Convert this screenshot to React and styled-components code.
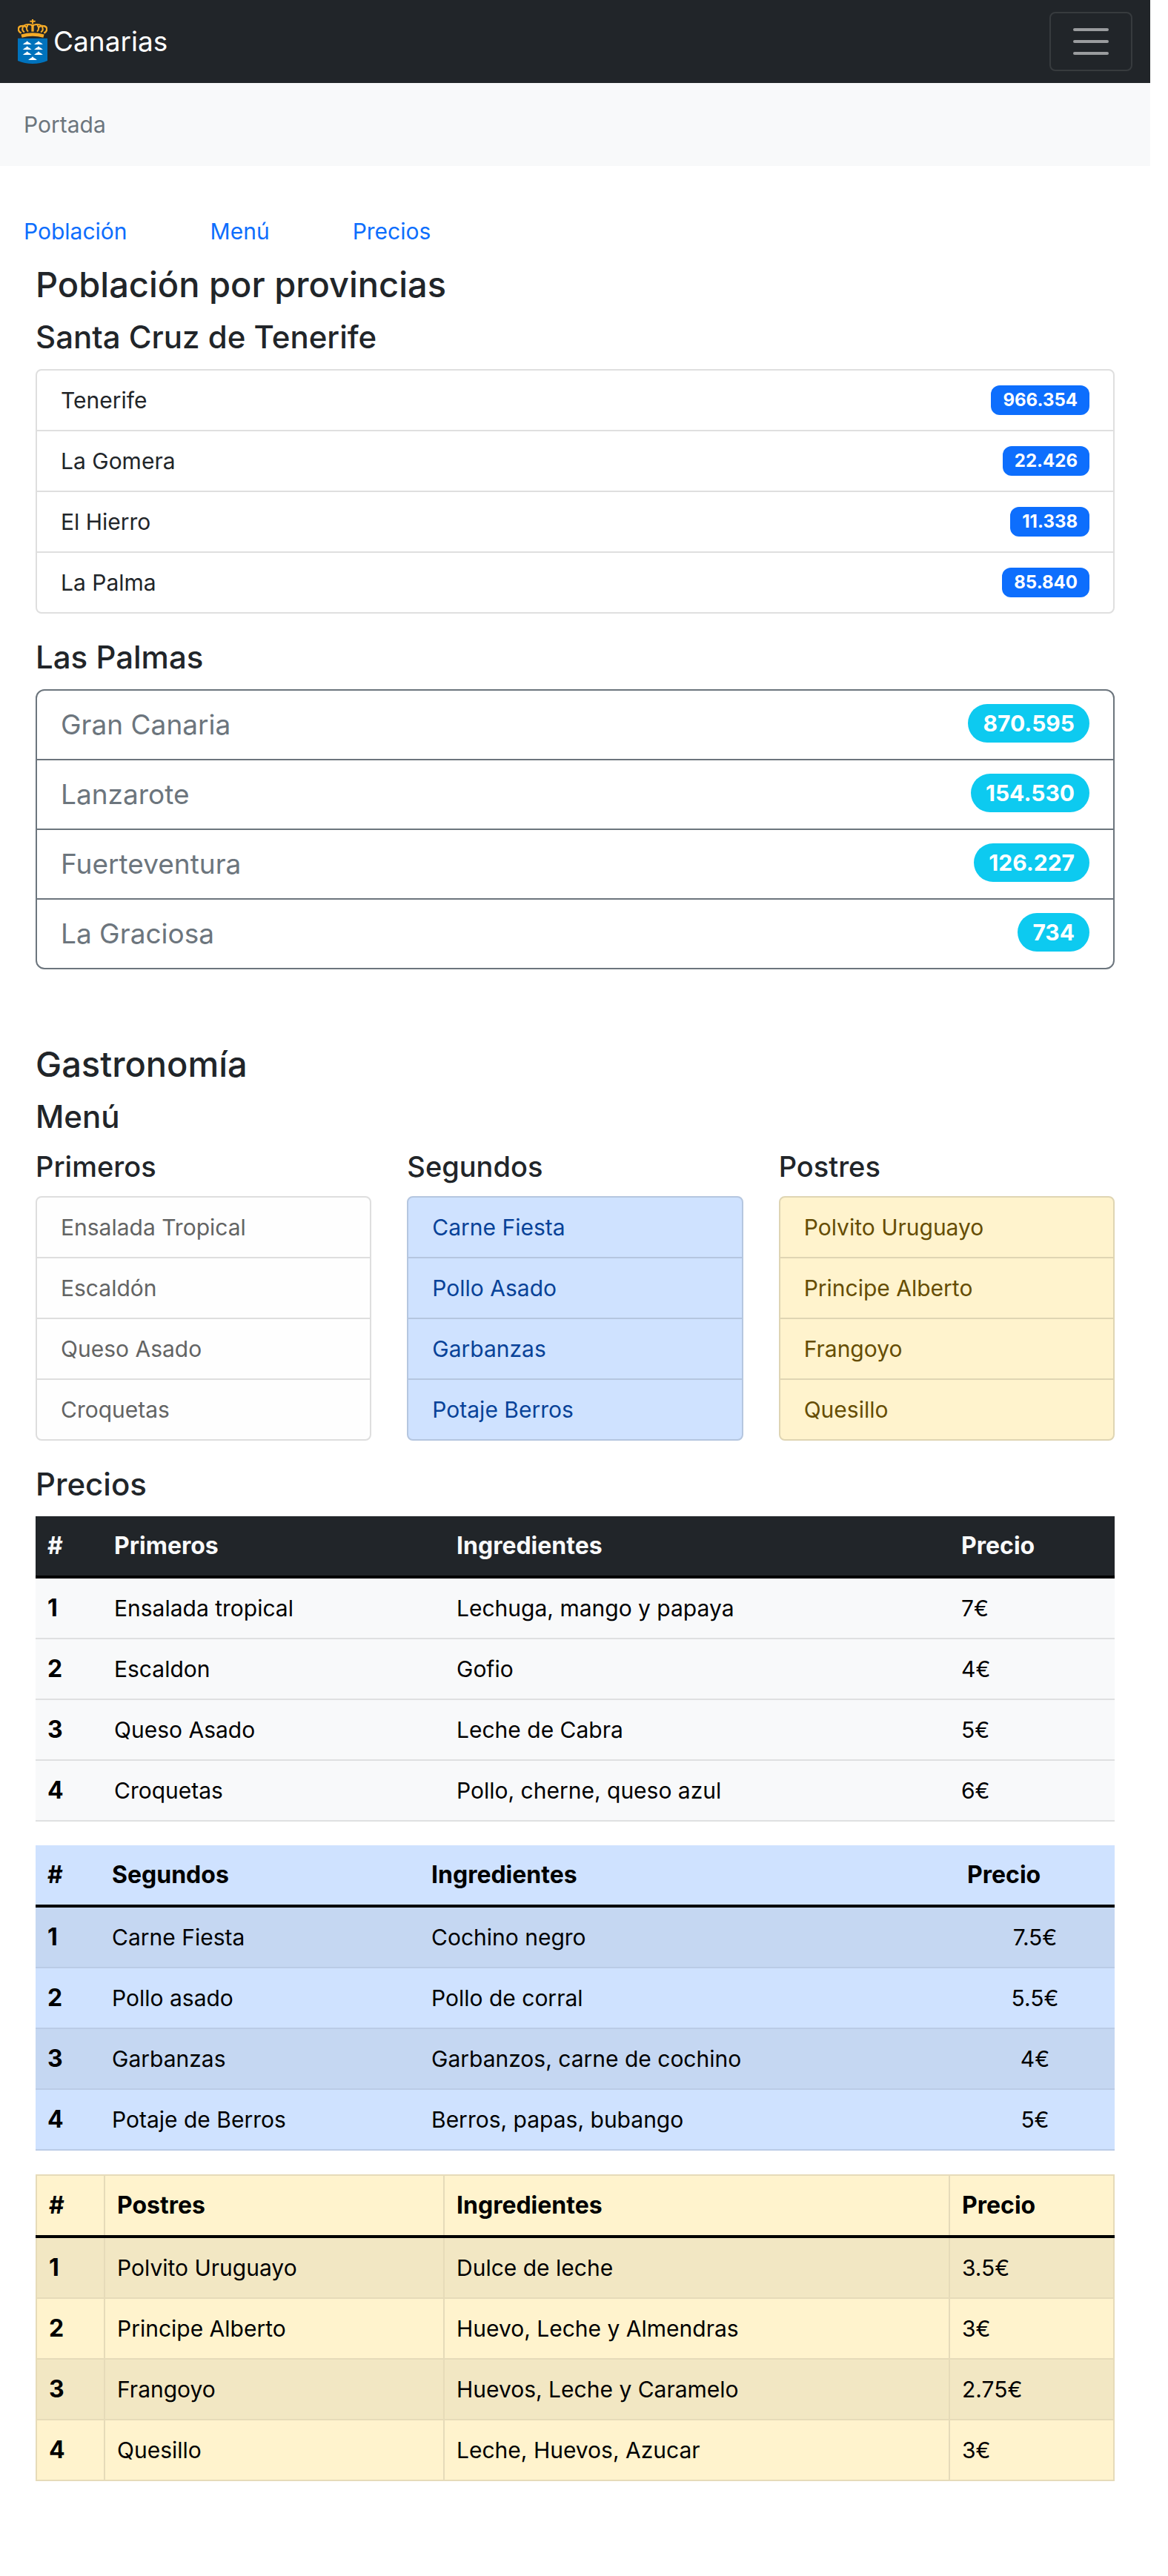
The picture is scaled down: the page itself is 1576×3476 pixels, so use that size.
import React from "react";
import styled, { createGlobalStyle, css } from "styled-components";

const GlobalStyle = createGlobalStyle`
  *, *::before, *::after { box-sizing: border-box; }
  body {
    margin: 0;
    background: #fff;
    color: #212529;
    font-family: Inter, "Liberation Sans", sans-serif;
    font-size: 30px;
    line-height: 48px;
  }
`;

const Page = styled.div`
  padding: 0 24px 128px 0;
`;

const Navbar = styled.nav`
  display: flex;
  align-items: center;
  justify-content: space-between;
  padding: 16px 24px;
  background: #212529;
`;

const Brand = styled.a`
  display: flex;
  align-items: center;
  gap: 8px;
  color: #fff;
  font-size: 37px;
  line-height: 60px;
  text-decoration: none;
`;

const Toggler = styled.button`
  display: flex;
  flex-direction: column;
  align-items: center;
  justify-content: center;
  gap: 12px;
  width: 112px;
  height: 80px;
  padding: 0;
  background: transparent;
  border: 2px solid rgba(255, 255, 255, 0.1);
  border-radius: 8px;
  cursor: pointer;
`;

const TogglerBar = styled.span`
  width: 48px;
  height: 4px;
  border-radius: 2px;
  background: rgba(255, 255, 255, 0.55);
`;

const Breadcrumb = styled.nav`
  padding: 32px;
  background: #f8f9fa;
  color: #6c757d;
`;

const Anchors = styled.nav`
  display: flex;
  gap: 112px;
  padding: 64px 32px 16px;
`;

const Anchor = styled.a`
  color: #0d6efd;
  text-decoration: none;
`;

const Section = styled.section`
  padding: 0 48px;

  & + & { margin-top: 96px; }
`;

const Title = styled.h1`
  margin: 0 0 12px;
  font-size: 47px;
  font-weight: 500;
  line-height: 64px;
`;

const Subtitle = styled.h2`
  margin: 0 0 16px;
  font-size: 42px;
  font-weight: 500;
  line-height: 54px;
`;

const ColumnTitle = styled.h3`
  margin: 0 0 16px;
  font-size: 38px;
  font-weight: 500;
  line-height: 48px;
`;

const tones = {
  plain: { bg: "#fff", line: "#dfdfdf", text: "#212529" },
  outline: { bg: "#fff", line: "#6c757d", text: "#6c757d" },
  light: { bg: "#fefefe", line: "#dedede", text: "#636464" },
  primary: { bg: "#cfe2ff", line: "#b5c6df", text: "#084298" },
  warning: { bg: "#fff3cd", line: "#dfd5b3", text: "#664d03" },
};

const List = styled.ul`
  margin: 0;
  padding: 0;
  list-style: none;
  overflow: hidden;
  color: ${(p) => tones[p.$tone].text};
  background: ${(p) => tones[p.$tone].bg};
  border: 2px solid ${(p) => tones[p.$tone].line};
  border-radius: ${(p) => (p.$large ? 12 : 8)}px;
  font-size: ${(p) => (p.$large ? 37 : 30)}px;
  line-height: ${(p) => (p.$large ? 60 : 48)}px;

  & + h2 { margin-top: 32px; }
`;

const Item = styled.li`
  display: flex;
  align-items: center;
  justify-content: space-between;
  padding: 16px 32px;
  border-bottom: 2px solid ${(p) => tones[p.$tone].line};

  &:last-child { border-bottom: 0; }
`;

const Badge = styled.span`
  padding: 8px 16px;
  border-radius: 12px;
  background: #0d6efd;
  color: #fff;
  font-size: 24px;
  font-weight: 700;
  line-height: 24px;

  ${(p) =>
    p.$pill &&
    css`
      margin-bottom: 4px;
      padding: 11px 20px;
      border-radius: 26px;
      background: #0dcaf0;
      font-size: 30px;
      line-height: 30px;
    `}
`;

const Columns = styled.div`
  display: grid;
  grid-template-columns: repeat(3, 1fr);
  gap: 48px;
  margin-bottom: 32px;
`;

const tableTones = {
  light: { bg: "#f8f9fa", line: "#dfe0e1", stripe: "#f8f9fa", headBg: "#212529", headText: "#f8f9fa" },
  primary: { bg: "#cfe2ff", line: "#bacbe6", stripe: "#c5d7f2", headBg: "#cfe2ff", headText: "#000" },
  warning: { bg: "#fff3cd", line: "#e6dbb9", stripe: "#f2e7c3", headBg: "#fff3cd", headText: "#000" },
};

const Table = styled.table`
  width: 100%;
  table-layout: fixed;
  border-collapse: separate;
  border-spacing: 0;
  color: #000;
  background: ${(p) => tableTones[p.$tone].bg};

  & + & { margin-top: 32px; }

  th, td {
    padding: 16px;
    text-align: left;
    border-bottom: 2px solid ${(p) => tableTones[p.$tone].line};
  }

  th { font-size: 32px; }

  thead th {
    background: ${(p) => tableTones[p.$tone].headBg};
    color: ${(p) => tableTones[p.$tone].headText};
    border-bottom: 4px solid #000;
  }

  tbody tr:nth-child(odd) { background: ${(p) => tableTones[p.$tone].stripe}; }

  ${(p) =>
    p.$centered &&
    css`
      td:last-child { text-align: center; }
    `}

  ${(p) =>
    p.$bordered &&
    css`
      background: linear-gradient(${tableTones[p.$tone].line}, ${tableTones[p.$tone].line});

      tbody tr:nth-child(even) { background: ${tableTones[p.$tone].bg}; }

      th:first-child { box-shadow: inset 2px 0 ${tableTones[p.$tone].line}; padding-left: 18px; }
      thead th { border-top: 2px solid ${tableTones[p.$tone].line}; }
      thead th + th, td { box-shadow: inset 2px 0 ${tableTones[p.$tone].line}; padding-left: 18px; }
      thead th:last-child, td:last-child {
        box-shadow: inset 2px 0 ${tableTones[p.$tone].line}, inset -2px 0 ${tableTones[p.$tone].line};
      }
    `}
`;

const Col = styled.col`
  width: ${(p) => (p.$width ? `${p.$width}px` : "auto")};
`;

function Peak({ x, y }) {
  return (
    <path
      d={`M${x - 18} ${y}Q${x - 13} ${y - 3} ${x - 11} ${y - 6}Q${x - 4} ${y - 8} ${x} ${y - 14}Q${x + 4} ${y - 8} ${x + 11} ${y - 6}Q${x + 13} ${y - 3} ${x + 18} ${y}Z`}
      fill="#fff"
    />
  );
}

function Crest() {
  const peaks = [[38, 102], [84, 102], [38, 123], [84, 123], [38, 144], [84, 144], [60, 165]];
  return (
    <svg width="40" height="60" viewBox="0 0 120 180" aria-hidden="true">
      <g fill="none" stroke="#f6ab27" strokeWidth="6">
        <path d="M60 0V18M49 8H71" />
        <path d="M14 56C-2 48 -2 28 18 27C30 26 33 30 32 34" strokeWidth="7" />
        <path d="M106 56C122 48 122 28 102 27C90 26 87 30 88 34" strokeWidth="7" />
        <path d="M27 52C14 46 16 22 40 21C52 20 58 24 60 29C62 24 68 20 80 21C104 22 106 46 93 52" />
        <path d="M42 50C34 42 34 32 41 24M78 50C86 42 86 32 79 24" />
        <path d="M60 20V50" strokeWidth="10" />
        <path d="M15 68Q60 55 105 68" strokeWidth="13" />
      </g>
      <path d="M0 77H120V168Q92 180 60 180Q28 180 0 168Z" fill="#0072bc" />
      {peaks.map(([x, y]) => (
        <Peak key={`${x}-${y}`} x={x} y={y} />
      ))}
    </svg>
  );
}

const tenerife = [["Tenerife", "966.354"], ["La Gomera", "22.426"], ["El Hierro", "11.338"], ["La Palma", "85.840"]];
const palmas = [["Gran Canaria", "870.595"], ["Lanzarote", "154.530"], ["Fuerteventura", "126.227"], ["La Graciosa", "734"]];

const menu = [
  { title: "Primeros", tone: "light", items: ["Ensalada Tropical", "Escaldón", "Queso Asado", "Croquetas"] },
  { title: "Segundos", tone: "primary", items: ["Carne Fiesta", "Pollo Asado", "Garbanzas", "Potaje Berros"] },
  { title: "Postres", tone: "warning", items: ["Polvito Uruguayo", "Principe Alberto", "Frangoyo", "Quesillo"] },
];

const prices = [
  {
    title: "Primeros",
    tone: "light",
    widths: [90, 462, null, 223],
    rows: [
      ["Ensalada tropical", "Lechuga, mango y papaya", "7€"],
      ["Escaldon", "Gofio", "4€"],
      ["Queso Asado", "Leche de Cabra", "5€"],
      ["Croquetas", "Pollo, cherne, queso azul", "6€"],
    ],
  },
  {
    title: "Segundos",
    tone: "primary",
    centered: true,
    widths: [87, 431, null, 215],
    rows: [
      ["Carne Fiesta", "Cochino negro", "7.5€"],
      ["Pollo asado", "Pollo de corral", "5.5€"],
      ["Garbanzas", "Garbanzos, carne de cochino", "4€"],
      ["Potaje de Berros", "Berros, papas, bubango", "5€"],
    ],
  },
  {
    title: "Postres",
    tone: "warning",
    bordered: true,
    widths: [92, 458, null, 224],
    rows: [
      ["Polvito Uruguayo", "Dulce de leche", "3.5€"],
      ["Principe Alberto", "Huevo, Leche y Almendras", "3€"],
      ["Frangoyo", "Huevos, Leche y Caramelo", "2.75€"],
      ["Quesillo", "Leche, Huevos, Azucar", "3€"],
    ],
  },
];

function Population({ data, tone, large }) {
  return (
    <List $tone={tone} $large={large}>
      {data.map(([name, count]) => (
        <Item key={name} $tone={tone}>
          {name}
          <Badge $pill={large}>{count}</Badge>
        </Item>
      ))}
    </List>
  );
}

function PriceTable({ title, tone, centered, bordered, widths, rows }) {
  return (
    <Table $tone={tone} $centered={centered} $bordered={bordered}>
      <colgroup>
        {widths.map((w, i) => (
          <Col key={i} $width={w} />
        ))}
      </colgroup>
      <thead>
        <tr>
          <th scope="col">#</th>
          <th scope="col">{title}</th>
          <th scope="col">Ingredientes</th>
          <th scope="col">Precio</th>
        </tr>
      </thead>
      <tbody>
        {rows.map(([dish, ingredients, price], i) => (
          <tr key={dish}>
            <th scope="row">{i + 1}</th>
            <td>{dish}</td>
            <td>{ingredients}</td>
            <td>{price}</td>
          </tr>
        ))}
      </tbody>
    </Table>
  );
}

export default function App() {
  return (
    <Page>
      <GlobalStyle />
      <Navbar>
        <Brand href="#">
          <Crest />
          Canarias
        </Brand>
        <Toggler type="button" aria-label="Menú de navegación">
          <TogglerBar />
          <TogglerBar />
          <TogglerBar />
        </Toggler>
      </Navbar>
      <Breadcrumb aria-label="Ruta">Portada</Breadcrumb>
      <Anchors>
        <Anchor href="#poblacion">Población</Anchor>
        <Anchor href="#menu">Menú</Anchor>
        <Anchor href="#precios">Precios</Anchor>
      </Anchors>
      <main>
        <Section id="poblacion">
          <Title>Población por provincias</Title>
          <Subtitle>Santa Cruz de Tenerife</Subtitle>
          <Population data={tenerife} tone="plain" />
          <Subtitle>Las Palmas</Subtitle>
          <Population data={palmas} tone="outline" large />
        </Section>
        <Section>
          <Title>Gastronomía</Title>
          <Subtitle id="menu">Menú</Subtitle>
          <Columns>
            {menu.map(({ title, tone, items }) => (
              <div key={title}>
                <ColumnTitle>{title}</ColumnTitle>
                <List $tone={tone}>
                  {items.map((item) => (
                    <Item key={item} $tone={tone}>{item}</Item>
                  ))}
                </List>
              </div>
            ))}
          </Columns>
          <Subtitle id="precios">Precios</Subtitle>
          {prices.map((table) => (
            <PriceTable key={table.title} {...table} />
          ))}
        </Section>
      </main>
    </Page>
  );
}
